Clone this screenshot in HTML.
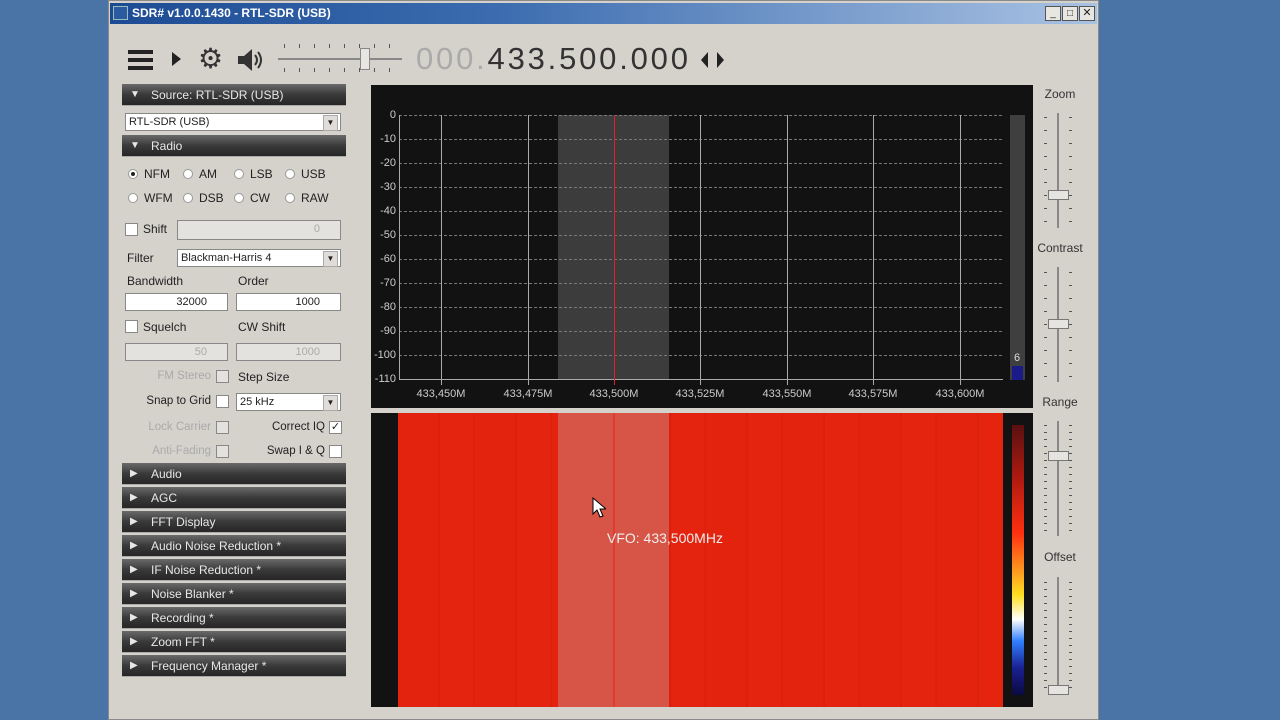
<!DOCTYPE html>
<html><head><meta charset="utf-8"><style>
*{margin:0;padding:0;box-sizing:border-box}
body{width:1280px;height:720px;background:#4a73a6;position:relative;overflow:hidden;font-family:"Liberation Sans",sans-serif;font-size:12px;color:#222}
.a{position:absolute}
.win{left:108px;top:0;width:991px;height:720px;background:#d5d2cc;border:1px solid #8a8a8a}
.title{left:110px;top:3px;width:987px;height:21px;background:linear-gradient(90deg,#1c4b94,#3d6db0 40%,#a9c2e3);color:#fff;font-weight:bold;font-size:12px;line-height:21px;padding-left:22px}
.hdr{left:122px;width:224px;height:22px;background:linear-gradient(#6a6a6a,#3a3a3a 50%,#262626);color:#e8e8e8;font-size:12px;line-height:22px;padding-left:29px;border-bottom:1px solid #aaa}
.hdr span{position:absolute;left:8px;font-size:10px}
.cb{width:13px;height:13px;background:#fff;border:1px solid #888}
.rd{width:10px;height:10px;border-radius:50%;background:#fff;border:1px solid #999}
.inp{background:#fff;border:1px solid #888;height:18px;text-align:right;padding-right:20px;line-height:16px;font-size:11px}
.dis{background:#e4e2de;color:#aaa}
.dd{background:#fff;border:1px solid #888;height:18px;line-height:16px;padding-left:3px;font-size:11px}
.dd:after{content:"▼";position:absolute;right:2px;top:1px;width:13px;height:14px;background:#e0ddd8;font-size:8px;text-align:center;line-height:14px;border:1px solid #aaa}
.gray{color:#aaa}
.rl{text-align:right;width:100px;font-size:11.5px}
.yl{color:#ccc;font-size:11px;text-align:right;width:26px}
.xl{color:#ccc;font-size:11px;width:60px;text-align:center;top:388px}
.slt{font-size:12px;color:#333;width:60px;text-align:center}
</style></head><body>
<div class="a win"></div>
<div class="a title">SDR# v1.0.0.1430 - RTL-SDR (USB)</div>
<div class="a" style="left:113px;top:6px;width:15px;height:14px;background:#2a5aa0;border:1px solid #9bb"></div>
<div class="a" style="left:1045px;top:6px;width:50px;height:15px;display:flex;gap:1px">
<div style="width:16px;height:15px;background:#e8e6e0;border:1px solid #555;font-size:10px;text-align:center;line-height:13px">_</div>
<div style="width:16px;height:15px;background:#e8e6e0;border:1px solid #555;font-size:10px;text-align:center;line-height:13px">□</div>
<div style="width:16px;height:15px;background:#e8e6e0;border:1px solid #555;font-size:11px;text-align:center;line-height:13px">✕</div></div>
<!-- toolbar -->
<div class="a" style="left:128px;top:50px;width:25px;height:4px;background:#222;box-shadow:0 8px 0 #222,0 16px 0 #222"></div>
<div class="a" style="left:172px;top:52px;width:0;height:0;border-left:9px solid #222;border-top:7px solid transparent;border-bottom:7px solid transparent"></div>
<div class="a" style="left:198px;top:44px;font-size:28px;color:#333;line-height:30px">⚙</div>
<svg class="a" style="left:236px;top:48px" width="28" height="24"><path d="M2 8h6l8-7v22l-8-7H2z" fill="#333"/><path d="M19 7q4 5 0 10M22 4q6 8 0 16" stroke="#333" stroke-width="2" fill="none"/></svg>
<div class="a" style="left:278px;top:58px;width:124px;height:2px;background:#888"></div>
<div class="a" style="left:284px;top:44px;width:110px;height:4px;background:repeating-linear-gradient(90deg,#555 0 1px,transparent 1px 15px)"></div>
<div class="a" style="left:284px;top:68px;width:110px;height:4px;background:repeating-linear-gradient(90deg,#555 0 1px,transparent 1px 15px)"></div>
<div class="a" style="left:360px;top:48px;width:10px;height:22px;background:#e8e6e2;border:1px solid #888"></div>
<div class="a" style="left:416px;top:41px;font-size:31px;color:#aaa;letter-spacing:2.8px;white-space:nowrap">000.<span style="color:#333">433.500.000</span></div>
<div class="a" style="left:701px;top:52px;width:0;height:0;border-right:7px solid #222;border-top:8px solid transparent;border-bottom:8px solid transparent"></div>
<div class="a" style="left:717px;top:52px;width:0;height:0;border-left:7px solid #222;border-top:8px solid transparent;border-bottom:8px solid transparent"></div>
<!-- left panel -->
<div class="a hdr" style="top:84px"><span>▼</span>Source: RTL-SDR (USB)</div>
<div class="a dd" style="left:125px;top:113px;width:216px">RTL-SDR (USB)</div>
<div class="a hdr" style="top:135px"><span>▼</span>Radio</div>
<div class="a rd" style="left:128px;top:169px"></div><div class="a" style="left:131px;top:172px;width:4px;height:4px;border-radius:50%;background:#222"></div><div class="a" style="left:144px;top:167px">NFM</div>
<div class="a rd" style="left:183px;top:169px"></div><div class="a" style="left:199px;top:167px">AM</div>
<div class="a rd" style="left:234px;top:169px"></div><div class="a" style="left:250px;top:167px">LSB</div>
<div class="a rd" style="left:285px;top:169px"></div><div class="a" style="left:301px;top:167px">USB</div>
<div class="a rd" style="left:128px;top:193px"></div><div class="a" style="left:144px;top:191px">WFM</div>
<div class="a rd" style="left:183px;top:193px"></div><div class="a" style="left:199px;top:191px">DSB</div>
<div class="a rd" style="left:234px;top:193px"></div><div class="a" style="left:250px;top:191px">CW</div>
<div class="a rd" style="left:285px;top:193px"></div><div class="a" style="left:301px;top:191px">RAW</div>
<div class="a cb" style="left:125px;top:223px"></div><div class="a" style="left:143px;top:222px">Shift</div>
<div class="a inp dis" style="left:177px;top:220px;width:164px;height:20px">0</div>
<div class="a" style="left:127px;top:251px">Filter</div>
<div class="a dd" style="left:177px;top:249px;width:164px">Blackman-Harris 4</div>
<div class="a" style="left:127px;top:274px">Bandwidth</div><div class="a" style="left:238px;top:274px">Order</div>
<div class="a inp" style="left:125px;top:293px;width:103px">32000</div>
<div class="a inp" style="left:236px;top:293px;width:105px">1000</div>
<div class="a cb" style="left:125px;top:320px"></div><div class="a" style="left:143px;top:320px">Squelch</div>
<div class="a" style="left:238px;top:320px">CW Shift</div>
<div class="a inp dis" style="left:125px;top:343px;width:103px">50</div>
<div class="a inp dis" style="left:236px;top:343px;width:105px">1000</div>
<div class="a gray rl" style="left:111px;top:370px">FM Stereo</div><div class="a cb" style="left:216px;top:370px;background:#e4e2de"></div>
<div class="a" style="left:238px;top:370px">Step Size</div>
<div class="a rl" style="left:111px;top:395px">Snap to Grid</div><div class="a cb" style="left:216px;top:395px"></div>
<div class="a dd" style="left:236px;top:393px;width:105px">25 kHz</div>
<div class="a gray rl" style="left:111px;top:421px">Lock Carrier</div><div class="a cb" style="left:216px;top:421px;background:#e4e2de"></div>
<div class="a rl" style="left:225px;top:421px">Correct IQ</div><div class="a cb" style="left:329px;top:421px;font-size:11px;line-height:11px;text-align:center">✓</div>
<div class="a gray rl" style="left:111px;top:445px">Anti-Fading</div><div class="a cb" style="left:216px;top:445px;background:#e4e2de"></div>
<div class="a rl" style="left:225px;top:445px">Swap I &amp; Q</div><div class="a cb" style="left:329px;top:445px"></div>
<div class="a hdr" style="top:463px"><span>▶</span>Audio</div>
<div class="a hdr" style="top:487px"><span>▶</span>AGC</div>
<div class="a hdr" style="top:511px"><span>▶</span>FFT Display</div>
<div class="a hdr" style="top:535px"><span>▶</span>Audio Noise Reduction *</div>
<div class="a hdr" style="top:559px"><span>▶</span>IF Noise Reduction *</div>
<div class="a hdr" style="top:583px"><span>▶</span>Noise Blanker *</div>
<div class="a hdr" style="top:607px"><span>▶</span>Recording *</div>
<div class="a hdr" style="top:631px"><span>▶</span>Zoom FFT *</div>
<div class="a hdr" style="top:655px"><span>▶</span>Frequency Manager *</div>
<!-- spectrum -->
<div class="a" style="left:371px;top:85px;width:662px;height:323px;background:#121212"></div>
<div class="a" style="left:558px;top:115px;width:111px;height:264px;background:#3c3c3c"></div>
<svg class="a" style="left:371px;top:85px" width="662" height="323">
<g stroke="#777" stroke-dasharray="3,2" stroke-width="1">
<line x1="28" y1="54.5" x2="632" y2="54.5"/><line x1="28" y1="78.5" x2="632" y2="78.5"/><line x1="28" y1="102.5" x2="632" y2="102.5"/><line x1="28" y1="126.5" x2="632" y2="126.5"/><line x1="28" y1="150.5" x2="632" y2="150.5"/><line x1="28" y1="174.5" x2="632" y2="174.5"/><line x1="28" y1="198.5" x2="632" y2="198.5"/><line x1="28" y1="222.5" x2="632" y2="222.5"/><line x1="28" y1="246.5" x2="632" y2="246.5"/><line x1="28" y1="270.5" x2="632" y2="270.5"/><line x1="28" y1="30.5" x2="632" y2="30.5"/>
</g>
<g stroke="#aaa"><line x1="70.5" y1="30" x2="70.5" y2="300"/><line x1="157.5" y1="30" x2="157.5" y2="300"/><line x1="329.5" y1="30" x2="329.5" y2="300"/><line x1="416.5" y1="30" x2="416.5" y2="300"/><line x1="502.5" y1="30" x2="502.5" y2="300"/><line x1="589.5" y1="30" x2="589.5" y2="300"/>
<line x1="28.5" y1="30" x2="28.5" y2="294"/><line x1="28" y1="294.5" x2="632" y2="294.5"/></g>
<line x1="243.5" y1="30" x2="243.5" y2="300" stroke="#e02030"/>
<rect x="639" y="30" width="15" height="265" fill="#3f3f3f"/><rect x="641" y="281" width="11" height="14" fill="#1a1a88"/>
<text x="643" y="276" fill="#ddd" font-size="11" font-family="Liberation Sans">6</text>
</svg>
<div class="a yl" style="left:370px;top:109px">0</div><div class="a yl" style="left:370px;top:133px">-10</div><div class="a yl" style="left:370px;top:157px">-20</div><div class="a yl" style="left:370px;top:181px">-30</div><div class="a yl" style="left:370px;top:205px">-40</div><div class="a yl" style="left:370px;top:229px">-50</div><div class="a yl" style="left:370px;top:253px">-60</div><div class="a yl" style="left:370px;top:277px">-70</div><div class="a yl" style="left:370px;top:301px">-80</div><div class="a yl" style="left:370px;top:325px">-90</div><div class="a yl" style="left:370px;top:349px">-100</div><div class="a yl" style="left:370px;top:373px">-110</div>
<div class="a xl" style="left:411px">433,450M</div><div class="a xl" style="left:498px">433,475M</div><div class="a xl" style="left:584px">433,500M</div><div class="a xl" style="left:670px">433,525M</div><div class="a xl" style="left:757px">433,550M</div><div class="a xl" style="left:843px">433,575M</div><div class="a xl" style="left:930px">433,600M</div>
<!-- waterfall -->
<div class="a" style="left:371px;top:413px;width:662px;height:294px;background:#121212"></div>
<div class="a" style="left:398px;top:413px;width:605px;height:294px;background:repeating-linear-gradient(90deg,#e4230f 0 40px,#dc200e 40px 42px,#e5240f 42px 75px,#de210e 75px 77px)"></div>
<div class="a" style="left:558px;top:413px;width:111px;height:294px;background:#d65546"></div>
<div class="a" style="left:613px;top:413px;width:2px;height:294px;background:#e23a2c"></div>
<div class="a" style="left:1012px;top:425px;width:12px;height:270px;background:linear-gradient(#5a1010,#b01a10 20%,#ff3010 40%,#ffa020 55%,#ffe020 63%,#fff 72%,#3080ff 80%,#1a2090 90%,#0a0a40)"></div>
<div class="a" style="left:607px;top:530px;color:#eee;font-size:14px">VFO: 433,500MHz</div>
<svg class="a" style="left:592px;top:497px" width="14" height="22"><path d="M1 1v16l4-4 3 7 3-1-3-7h6z" fill="#fff" stroke="#000"/></svg>
<!-- right sliders -->
<div class="a slt" style="left:1030px;top:87px">Zoom</div>
<div class="a slt" style="left:1030px;top:241px">Contrast</div>
<div class="a slt" style="left:1030px;top:395px">Range</div>
<div class="a slt" style="left:1030px;top:550px">Offset</div>
<div class="a" style="left:1057px;top:113px;width:2px;height:115px;background:#888"></div>
<div class="a" style="left:1057px;top:267px;width:2px;height:115px;background:#888"></div>
<div class="a" style="left:1057px;top:421px;width:2px;height:115px;background:#888"></div>
<div class="a" style="left:1057px;top:577px;width:2px;height:115px;background:#888"></div>
<div class="a" style="left:1044px;top:117px;width:3px;height:110px;background:repeating-linear-gradient(#555 0 1px,transparent 1px 13px)"></div>
<div class="a" style="left:1069px;top:117px;width:3px;height:110px;background:repeating-linear-gradient(#555 0 1px,transparent 1px 13px)"></div>
<div class="a" style="left:1044px;top:272px;width:3px;height:110px;background:repeating-linear-gradient(#555 0 1px,transparent 1px 13px)"></div>
<div class="a" style="left:1069px;top:272px;width:3px;height:110px;background:repeating-linear-gradient(#555 0 1px,transparent 1px 13px)"></div>
<div class="a" style="left:1044px;top:425px;width:3px;height:110px;background:repeating-linear-gradient(#555 0 1px,transparent 1px 7px)"></div>
<div class="a" style="left:1069px;top:425px;width:3px;height:110px;background:repeating-linear-gradient(#555 0 1px,transparent 1px 7px)"></div>
<div class="a" style="left:1044px;top:582px;width:3px;height:110px;background:repeating-linear-gradient(#555 0 1px,transparent 1px 7px)"></div>
<div class="a" style="left:1069px;top:582px;width:3px;height:110px;background:repeating-linear-gradient(#555 0 1px,transparent 1px 7px)"></div>
<div class="a" style="left:1048px;top:190px;width:21px;height:10px;background:#e6e4e0;border:1px solid #777"></div>
<div class="a" style="left:1048px;top:319px;width:21px;height:10px;background:#e6e4e0;border:1px solid #777"></div>
<div class="a" style="left:1048px;top:451px;width:21px;height:10px;background:#e6e4e0;border:1px solid #777"></div>
<div class="a" style="left:1048px;top:685px;width:21px;height:10px;background:#e6e4e0;border:1px solid #777"></div>
</body></html>
